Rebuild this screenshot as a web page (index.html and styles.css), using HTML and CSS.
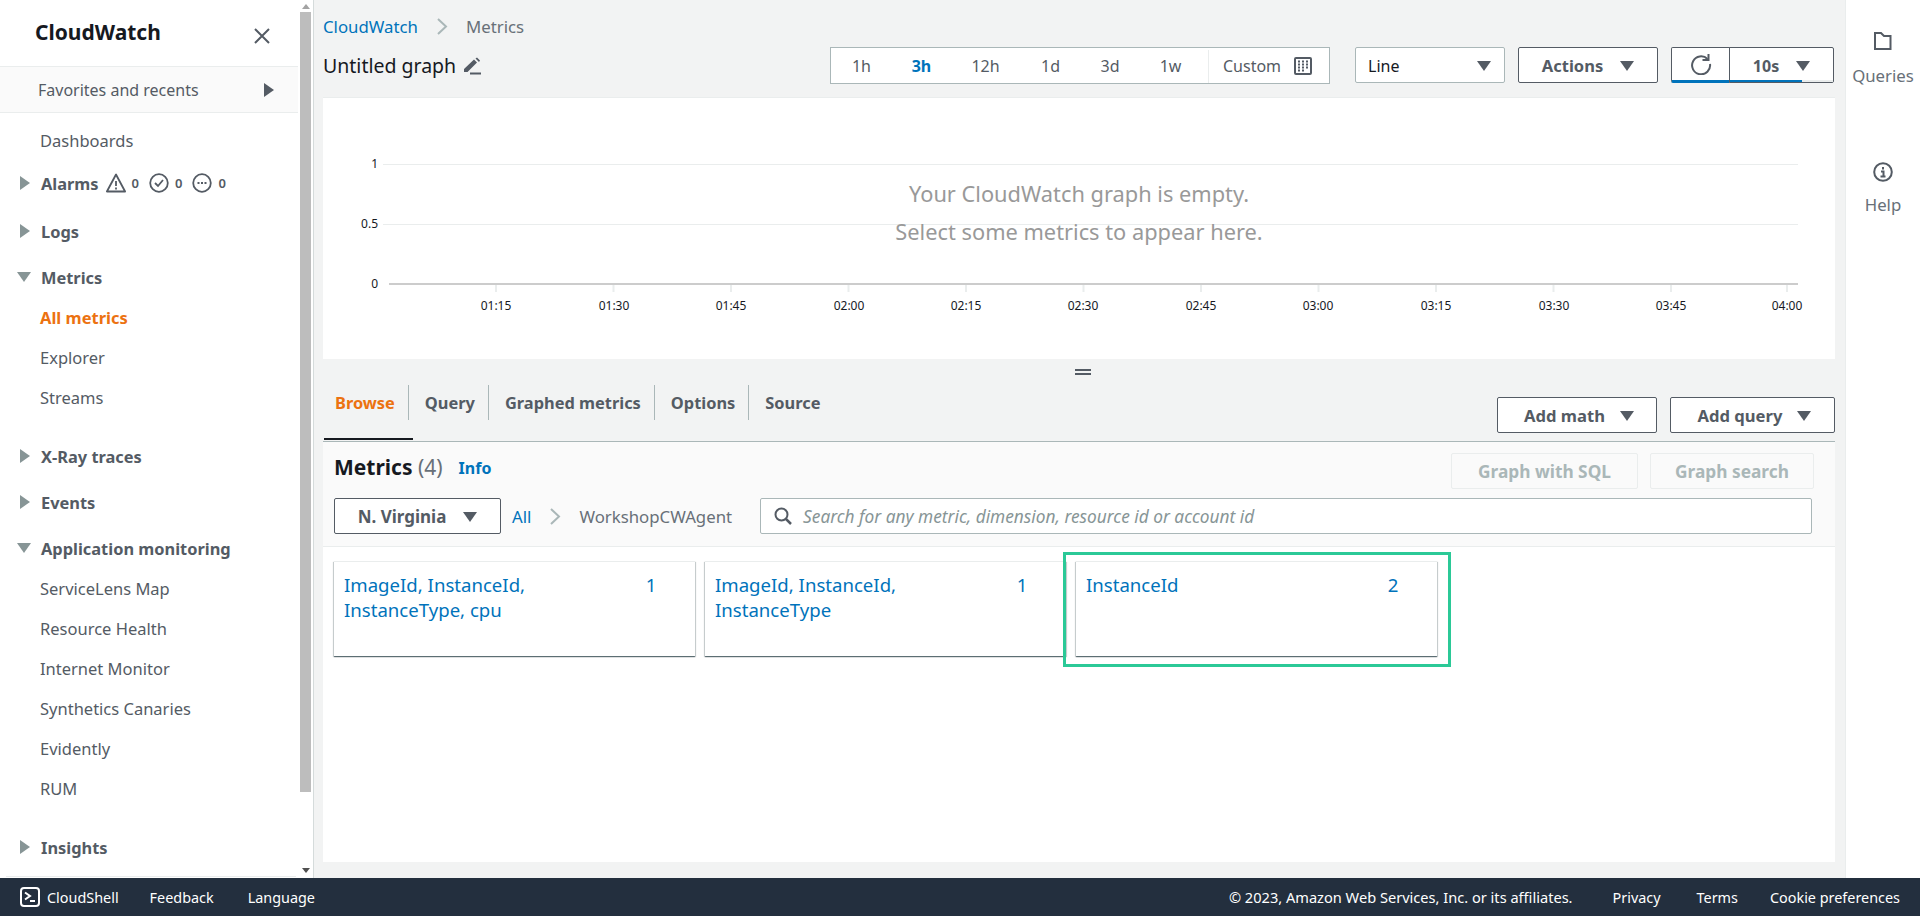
FILE: index.html
```html
<!DOCTYPE html>
<html lang="en">

<head>
    <meta charset="UTF-8" />
    <title>Metrics | CloudWatch</title>
    <link rel="stylesheet" href="styles.css">
</head>

<body>
    <div class="app">
        <!-- Left navigation -->
        <aside class="sidebar">
            <nav class="nav">
                <div class="nav-title">
                    <span>CloudWatch</span>
                    <svg class="nav-close" width="16" height="16" viewBox="0 0 16 16"><path d="M1 1l14 14M15 1L1 15" stroke="#545b64" stroke-width="2" fill="none" /></svg>
                </div>
                <div class="nav-favorites">
                    <span>Favorites and recents</span>
                    <span class="tri-right dark"></span>
                </div>
                <a class="nav-item first">Dashboards</a>
                <div class="nav-head alarms"><span class="tri-right"></span><b>Alarms</b>
                    <svg class="alarm-icon" width="20" height="20" viewBox="0 0 20 20"><path d="M10 1.500L.9 18.500h18.200z" fill="none" stroke="#545b64" stroke-width="1.800" stroke-linejoin="round" /><path d="M10 8v5M10 14.500v2" stroke="#545b64" stroke-width="1.800" /></svg><span class="alarm-count">0</span>
                    <svg class="alarm-icon" width="20" height="20" viewBox="0 0 20 20"><circle cx="10" cy="10" r="8.800" fill="none" stroke="#545b64" stroke-width="1.800" /><path d="M6 10l3 3 5-6" fill="none" stroke="#545b64" stroke-width="1.800" /></svg><span class="alarm-count">0</span>
                    <svg class="alarm-icon" width="20" height="20" viewBox="0 0 20 20"><circle cx="10" cy="10" r="8.800" fill="none" stroke="#545b64" stroke-width="1.800" /><path d="M5.500 10h2M9 10h2M12.500 10h2" stroke="#545b64" stroke-width="2" /></svg><span class="alarm-count">0</span>
                </div>
                <div class="nav-head logs"><span class="tri-right"></span><b>Logs</b></div>
                <div class="nav-head"><span class="tri-down"></span><b>Metrics</b></div>
                <a class="nav-item active">All metrics</a>
                <a class="nav-item">Explorer</a>
                <a class="nav-item">Streams</a>
                <div class="nav-head spaced"><span class="tri-right"></span><b>X-Ray traces</b></div>
                <div class="nav-head"><span class="tri-right"></span><b>Events</b></div>
                <div class="nav-head"><span class="tri-down"></span><b>Application monitoring</b></div>
                <a class="nav-item">ServiceLens Map</a>
                <a class="nav-item">Resource Health</a>
                <a class="nav-item">Internet Monitor</a>
                <a class="nav-item">Synthetics Canaries</a>
                <a class="nav-item">Evidently</a>
                <a class="nav-item">RUM</a>
                <div class="nav-head spaced"><span class="tri-right"></span><b>Insights</b></div>
                <div class="nav-bottom-line"></div>
            </nav>
            <div class="scrollbar">
                <span class="scroll-up"></span>
                <div class="scroll-thumb"></div>
                <span class="scroll-down"></span>
            </div>
        </aside>

        <main class="main">
            <div class="breadcrumb">
                <a class="link">CloudWatch</a>
                <svg width="11" height="17" viewBox="0 0 11 17"><path d="M1 1l8 7.500-8 7.500" fill="none" stroke="#aab7b8" stroke-width="2" /></svg>
                <span>Metrics</span>
            </div>

            <div class="toolbar">
                <div class="graph-name">
                    <span>Untitled graph</span>
                    <svg width="18" height="18" viewBox="0 0 18 18"><path d="M1 12L11 2.500l3 3L4.500 15H1zM12.500 1.500l1.500-1 3 3-1 1.500z" fill="#545b64" /><path d="M7 16.500h11" stroke="#545b64" stroke-width="2" /></svg>
                </div>
                <div class="range">
                    <span class="range-item w1h">1h</span>
                    <span class="range-item w3h selected">3h</span>
                    <span class="range-item w12h">12h</span>
                    <span class="range-item w1d">1d</span>
                    <span class="range-item w3d">3d</span>
                    <span class="range-item w1w">1w</span>
                    <span class="range-custom">Custom
                        <svg width="18" height="18" viewBox="0 0 18 18"><rect x="1" y="1" width="16" height="16" rx="1" fill="none" stroke="#545b64" stroke-width="2" /><path d="M4 4.500h10M4 7.500h10M4 10.500h10M4 13.500h6" stroke="#545b64" stroke-width="2" stroke-dasharray="2 2" /></svg>
                    </span>
                </div>
                <div class="select-line">Line<span class="tri-down dark"></span></div>
                <button class="btn btn-actions">Actions<span class="tri-down dark"></span></button>
                <div class="refresh">
                    <button class="refresh-btn">
                        <svg width="22" height="22" viewBox="0 0 22 22"><path d="M17.500 6A9 9 0 1 0 20 11" fill="none" stroke="#545b64" stroke-width="2" /><path d="M18.500 1v6h-6" fill="none" stroke="#545b64" stroke-width="2" /></svg>
                    </button>
                    <button class="refresh-interval">10s<span class="tri-down dark"></span>
                        <span class="progress"><span class="progress-fill"></span></span>
                    </button>
                </div>
            </div>

            <section class="chart">
                <svg width="1512" height="261" viewBox="323 98 1512 261">
                    <g stroke="#eaeded" stroke-width="1">
                        <path d="M383 164.500H1798M383 224.500H1798" />
                        <path d="M496 285v7M613.500 285v7M731 285v7M848.500 285v7M966 285v7M1083.500 285v7M1201 285v7M1318.500 285v7M1436 285v7M1553.500 285v7M1671 285v7M1787 285v7" stroke-width="2" />
                    </g>
                    <path d="M389 284H1798" stroke="#ccc" stroke-width="2" />
                    <g class="axis-text" text-anchor="end">
                        <text x="378" y="168">1</text>
                        <text x="378" y="228">0.5</text>
                        <text x="378" y="288">0</text>
                    </g>
                    <g class="axis-text" text-anchor="middle">
                        <text x="496" y="310">01:15</text>
                        <text x="614" y="310">01:30</text>
                        <text x="731" y="310">01:45</text>
                        <text x="849" y="310">02:00</text>
                        <text x="966" y="310">02:15</text>
                        <text x="1083" y="310">02:30</text>
                        <text x="1201" y="310">02:45</text>
                        <text x="1318" y="310">03:00</text>
                        <text x="1436" y="310">03:15</text>
                        <text x="1554" y="310">03:30</text>
                        <text x="1671" y="310">03:45</text>
                        <text x="1787" y="310">04:00</text>
                    </g>
                    <g class="empty-text" text-anchor="middle">
                        <text x="1079" y="202">Your CloudWatch graph is empty.</text>
                        <text x="1079" y="240">Select some metrics to appear here.</text>
                    </g>
                </svg>
            </section>

            <div class="drag-handle"><span></span></div>

            <div class="tabs-row">
                <div class="tab active"><span class="tab-label">Browse</span></div>
                <div class="tab"><span class="tab-label">Query</span></div>
                <div class="tab"><span class="tab-label">Graphed metrics</span></div>
                <div class="tab"><span class="tab-label">Options</span></div>
                <div class="tab"><span class="tab-label no-line">Source</span></div>
                <div class="tab-actions">
                    <button class="btn btn-math">Add math<span class="tri-down dark"></span></button>
                    <button class="btn btn-query">Add query<span class="tri-down dark"></span></button>
                </div>
            </div>

            <section class="panel-head">
                <div class="panel-top">
                    <h2>Metrics <span class="count">(4)</span></h2>
                    <a class="info">Info</a>
                    <button class="btn-disabled sql">Graph with SQL</button>
                    <button class="btn-disabled search-btn">Graph search</button>
                </div>
                <div class="panel-filter">
                    <button class="btn btn-region">N. Virginia<span class="tri-down dark"></span></button>
                    <a class="link all">All</a>
                    <svg width="11" height="17" viewBox="0 0 11 17"><path d="M1 1l8 7.500-8 7.500" fill="none" stroke="#aab7b8" stroke-width="2" /></svg>
                    <span class="namespace">WorkshopCWAgent</span>
                    <div class="search">
                        <svg width="18" height="18" viewBox="0 0 18 18"><circle cx="7.500" cy="7.500" r="6" fill="none" stroke="#545b64" stroke-width="2" /><path d="M12 12l5 5" stroke="#545b64" stroke-width="2.500" /></svg>
                        <span>Search for any metric, dimension, resource id or account id</span>
                    </div>
                </div>
            </section>

            <section class="cards">
                <div class="card"><span>ImageId, InstanceId, InstanceType, cpu</span><span class="card-count">1</span></div>
                <div class="card"><span>ImageId, InstanceId, InstanceType</span><span class="card-count">1</span></div>
                <div class="card"><span>InstanceId</span><span class="card-count">2</span></div>
                <div class="highlight"></div>
            </section>
        </main>

        <!-- Right rail -->
        <aside class="rail">
            <div class="rail-item queries">
                <svg width="20" height="20" viewBox="0 0 20 20"><path d="M2 2h6l3 3h6.500v13H2z" fill="none" stroke="#545b64" stroke-width="2" /></svg>
                <span>Queries</span>
            </div>
            <div class="rail-item help">
                <svg width="20" height="20" viewBox="0 0 20 20"><circle cx="10" cy="10" r="8.800" fill="none" stroke="#545b64" stroke-width="2" /><path d="M10 5v2.500M8 9.500h2.500V14M7.500 14.500h5" fill="none" stroke="#545b64" stroke-width="2" /></svg>
                <span>Help</span>
            </div>
        </aside>
    </div>

    <footer class="footer">
        <a class="foot-shell">
            <svg width="20" height="20" viewBox="0 0 20 20"><rect x="1" y="1" width="18" height="18" rx="3" fill="none" stroke="#fff" stroke-width="2" /><path d="M5 5.500L10 9l-5 3.500" fill="none" stroke="#fff" stroke-width="2" /><path d="M10 14h5" stroke="#fff" stroke-width="2" /></svg>
            CloudShell
        </a>
        <a class="foot-feedback">Feedback</a>
        <a class="foot-language">Language</a>
        <span class="foot-copy">© 2023, Amazon Web Services, Inc. or its affiliates.</span>
        <a class="foot-privacy">Privacy</a>
        <a class="foot-terms">Terms</a>
        <a class="foot-cookie">Cookie preferences</a>
    </footer>
</body>

</html>
```
FILE: styles.css
```css
* {
    box-sizing: border-box;
}

body {
    margin: 0;
    height: 916px;
    overflow: hidden;
    font-family: "Noto Sans", Arial, sans-serif;
    font-size: 16px;
    color: #545b64;
    background-color: #f2f3f3;
    display: flex;
    flex-direction: column;
}

button {
    font-family: inherit;
}

.app {
    display: flex;
    height: 878px;
}

/* triangles */
.tri-right {
    display: inline-block;
    width: 0;
    height: 0;
    border-top: 7px solid transparent;
    border-bottom: 7px solid transparent;
    border-left: 10px solid #879596;
}

.tri-down {
    display: inline-block;
    width: 0;
    height: 0;
    border-left: 7px solid transparent;
    border-right: 7px solid transparent;
    border-top: 10px solid #879596;
}

.tri-right.dark {
    border-left-color: #545b64;
}

.tri-down.dark {
    border-top-color: #545b64;
}

/* sidebar */
.sidebar {
    width: 314px;
    flex-shrink: 0;
    background-color: #fff;
    border-right: 1px solid #d5dbdb;
    display: flex;
}

.nav {
    width: 298px;
    flex-shrink: 0;
}

.nav-title {
    height: 67px;
    padding: 18px 28px 0 35px;
    display: flex;
    justify-content: space-between;
    font-size: 21px;
    font-weight: 700;
    color: #16191f;
    border-bottom: 1px solid #eaeded;
}

.nav-close {
    margin-top: 10px;
}

.nav-favorites {
    height: 46px;
    padding: 0 24px 0 38px;
    display: flex;
    align-items: center;
    justify-content: space-between;
    background-color: #fafafa;
    border-bottom: 1px solid #eaeded;
}

.nav-item {
    display: block;
    height: 40px;
    line-height: 40px;
    padding-left: 40px;
    font-size: 16.5px;
}

.nav-item.first {
    margin-top: 8px;
}

.nav-item.active {
    color: #ec7211;
    font-weight: 700;
}

.nav-head {
    height: 40px;
    margin-top: 6px;
    padding: 0 0 2px 20px;
    display: flex;
    align-items: center;
    font-size: 16.4px;
}

.nav-head.alarms {
    margin-top: 3px;
}

.nav-head.logs {
    margin-top: 8px;
}

.nav-head.spaced {
    margin-top: 19px;
}

.nav-head b {
    margin-left: 11px;
    font-weight: 700;
}

.nav-head .tri-down {
    margin-left: -3px;
    margin-right: -1px;
}

.alarm-icon {
    margin-left: 10px;
}

.nav-head b + .alarm-icon {
    margin-left: 7px;
}

.alarm-count {
    margin-left: 6px;
    font-size: 13px;
    font-weight: 600;
}

.nav-bottom-line {
    margin: 8px 2px 0 6px;
    border-top: 1px solid #eaeded;
}

.scrollbar {
    width: 15px;
    display: flex;
    flex-direction: column;
    align-items: center;
    background-color: #fff;
}

.scroll-thumb {
    width: 11px;
    height: 780px;
    background-color: #bdbdbd;
}

.scroll-up {
    width: 0;
    height: 0;
    margin: 4px 0 3px;
    border-left: 4px solid transparent;
    border-right: 4px solid transparent;
    border-bottom: 5px solid #a3a3a3;
}

.scroll-down {
    width: 0;
    height: 0;
    margin-top: 76px;
    border-left: 4px solid transparent;
    border-right: 4px solid transparent;
    border-top: 5px solid #505050;
}

/* main column */
.main {
    width: 1531px;
    padding: 14px 10px 16px 9px;
    display: flex;
    flex-direction: column;
}

.link {
    color: #0073bb;
}

.breadcrumb {
    height: 26px;
    padding-bottom: 2px;
    display: flex;
    align-items: center;
    font-size: 16.8px;
    color: #687078;
}

.breadcrumb svg {
    margin: 0 18px 0 19px;
}

.toolbar {
    height: 37px;
    margin-top: 7px;
    margin-bottom: 13px;
    display: flex;
}

.graph-name {
    width: 507px;
    display: flex;
    align-items: center;
    font-size: 19.5px;
    color: #16191f;
}

.graph-name svg {
    margin-left: 7px;
}

.range {
    width: 500px;
    height: 37px;
    padding-top: 1px;
    display: flex;
    align-items: center;
    background-color: #fff;
    border: 1px solid #aab7b8;
    color: #545b64;
}

.range-item {
    text-align: center;
}

.range-item.selected {
    color: #0073bb;
    font-weight: 700;
}

.w1h { width: 61px; }
.w3h { width: 59px; }
.w12h { width: 69px; }
.w1d { width: 61px; }
.w3d { width: 58px; }
.w1w { width: 63px; margin-right: 6px; }

.range-custom {
    height: 33px;
    flex: 1;
    display: flex;
    align-items: center;
    padding-left: 14px;
    gap: 13px;
    border-left: 1px solid #eaeded;
}

.select-line {
    width: 150px;
    height: 36px;
    margin-left: 25px;
    padding: 1px 13px 0 12px;
    display: flex;
    align-items: center;
    justify-content: space-between;
    background-color: #fff;
    border: 1px solid #aab7b8;
    border-radius: 2px;
    color: #16191f;
}

.btn {
    height: 36px;
    display: flex;
    align-items: center;
    justify-content: center;
    gap: 17px;
    padding: 1px 0 0;
    background-color: #fff;
    border: 1px solid #545b64;
    border-radius: 2px;
    color: #545b64;
    font-size: 16px;
    font-weight: 700;
}

.btn-actions {
    width: 140px;
    margin-left: 13px;
    font-size: 16.5px;
}

.refresh {
    margin-left: 13px;
    display: flex;
}

.refresh-btn {
    width: 59px;
    height: 36px;
    padding: 0;
    display: flex;
    align-items: center;
    justify-content: center;
    background-color: #fff;
    border: 1px solid #545b64;
    border-bottom: 3px solid #0073bb;
    border-radius: 2px 0 0 2px;
}

.refresh-interval {
    position: relative;
    width: 105px;
    height: 36px;
    margin-left: -1px;
    padding: 1px 0 0;
    display: flex;
    align-items: center;
    justify-content: center;
    gap: 17px;
    background-color: #fff;
    border: 1px solid #545b64;
    border-radius: 0 2px 2px 0;
    color: #545b64;
    font-size: 16px;
    font-weight: 700;
}

.progress {
    position: absolute;
    left: 0;
    right: 0;
    bottom: 0;
    height: 2px;
    background-color: #eaeded;
}

.progress-fill {
    display: block;
    width: 72px;
    height: 2px;
    background-color: #0073bb;
}

/* chart */
.chart {
    height: 262px;
    background-color: #fff;
    border-top: 1px solid #eaeded;
}

.chart svg {
    display: block;
}

.axis-text {
    font-size: 12px;
    fill: #16191f;
}

.empty-text {
    font-size: 21.8px;
    fill: #999;
}

.drag-handle {
    height: 26px;
    display: flex;
    align-items: center;
    justify-content: center;
}

.drag-handle span {
    width: 16px;
    height: 6px;
    margin-right: -8px;
    border-top: 2px solid #545b64;
    border-bottom: 2px solid #545b64;
}

/* tabs */
.tabs-row {
    height: 57px;
    display: flex;
    border-bottom: 1px solid #aab7b8;
}

.tab {
    height: 55px;
    font-size: 16.4px;
    font-weight: 700;
    border-bottom: 2px solid transparent;
}

.tab-label {
    display: block;
    height: 35px;
    line-height: 36px;
    padding: 0 13px 0 16px;
    border-right: 1px solid #aab7b8;
}

.tab-label.no-line {
    border-right: none;
}

.tab.active {
    margin-left: 1px;
    margin-right: -4px;
    padding-right: 4px;
    border-bottom-color: #16191f;
    color: #ec7211;
}

.tab.active .tab-label {
    padding-left: 11px;
}

.tab-actions {
    margin-left: auto;
    padding-top: 12px;
    display: flex;
    gap: 13px;
}

.btn-math {
    width: 160px;
    padding-left: 4px;
    gap: 15px;
    font-size: 16.6px;
}

.btn-query {
    width: 165px;
    padding-left: 4px;
    gap: 15px;
    font-size: 16.6px;
}

/* metrics panel */
.panel-head {
    height: 105px;
    padding: 11px 23px 0 11px;
    background-color: #fafafa;
    border-bottom: 1px solid #eaeded;
}

.panel-top {
    display: flex;
    align-items: flex-start;
    height: 36px;
}

.panel-top h2 {
    margin: 0;
    font-size: 21px;
    font-weight: 700;
    line-height: 28px;
    color: #16191f;
}

.panel-top .count {
    font-weight: 400;
    color: #687078;
}

.info {
    margin-left: 16px;
    line-height: 30px;
    color: #0073bb;
    font-weight: 700;
}

.btn-disabled {
    height: 36px;
    padding: 0;
    background-color: #fafafa;
    border: 1px solid #eaeded;
    border-radius: 2px;
    color: #aab7b8;
    font-size: 17.3px;
    font-weight: 700;
}

.btn-disabled.sql {
    width: 187px;
    margin-left: auto;
}

.btn-disabled.search-btn {
    width: 164px;
    margin-left: 12px;
    margin-right: -2px;
}

.panel-filter {
    height: 36px;
    margin-top: 9px;
    display: flex;
    align-items: center;
}

.btn-region {
    width: 167px;
    font-size: 17px;
}

.all {
    margin-left: 11px;
    font-size: 16.8px;
}

.panel-filter > svg {
    margin: 0 18px 0 19px;
}

.namespace {
    font-size: 16.8px;
    color: #687078;
}

.search {
    flex: 1;
    height: 36px;
    margin-left: 28px;
    padding-left: 13px;
    display: flex;
    align-items: center;
    gap: 11px;
    background-color: #fff;
    border: 1px solid #aab7b8;
    border-radius: 2px;
    font-size: 17.3px;
    font-style: italic;
    color: #879596;
}

/* cards */
.cards {
    position: relative;
    flex: 1;
    padding: 14px 0 0 11px;
    display: flex;
    align-items: flex-start;
    gap: 10px;
    background-color: #fff;
}

.card {
    width: 361px;
    height: 95px;
    padding: 10px 34px 0 10px;
    display: flex;
    justify-content: space-between;
    font-size: 18.6px;
    line-height: 25px;
    color: #0073bb;
    background-color: #fff;
    border-top: 1px solid #eaeded;
    box-shadow: 0 1px 1px 0 rgba(0, 28, 36, 0.5), 1px 1px 1px 0 rgba(0, 28, 36, 0.15), -1px 1px 1px 0 rgba(0, 28, 36, 0.15);
}

.card > span:first-child {
    width: 240px;
}

.card-count {
    width: 20px;
    text-align: center;
}

.highlight {
    position: absolute;
    left: 740px;
    top: 5px;
    width: 388px;
    height: 115px;
    border: 3px solid #2bc997;
}

/* right rail */
.rail {
    width: 75px;
    background-color: #fff;
    border-left: 1px solid #eaeded;
}

.rail-item {
    display: flex;
    flex-direction: column;
    align-items: center;
    font-size: 16.8px;
    color: #687078;
}

.rail-item.queries {
    padding-top: 31px;
}

.rail-item.help {
    padding-top: 75px;
}

.rail-item span {
    margin-top: 13px;
}

.rail-item.help span {
    margin-top: 11px;
}

/* footer */
.footer {
    height: 38px;
    padding: 0 20px;
    display: flex;
    align-items: center;
    background-color: #232f3e;
    color: #fff;
    font-size: 14.4px;
}

.foot-shell {
    display: flex;
    align-items: center;
    gap: 7px;
}

.foot-feedback {
    margin-left: 31px;
}

.foot-language {
    margin-left: 34px;
}

.foot-copy {
    margin-left: auto;
    font-size: 14.6px;
}

.foot-privacy {
    margin-left: 40px;
}

.foot-terms {
    margin-left: 36px;
}

.foot-cookie {
    margin-left: 32px;
}
```
